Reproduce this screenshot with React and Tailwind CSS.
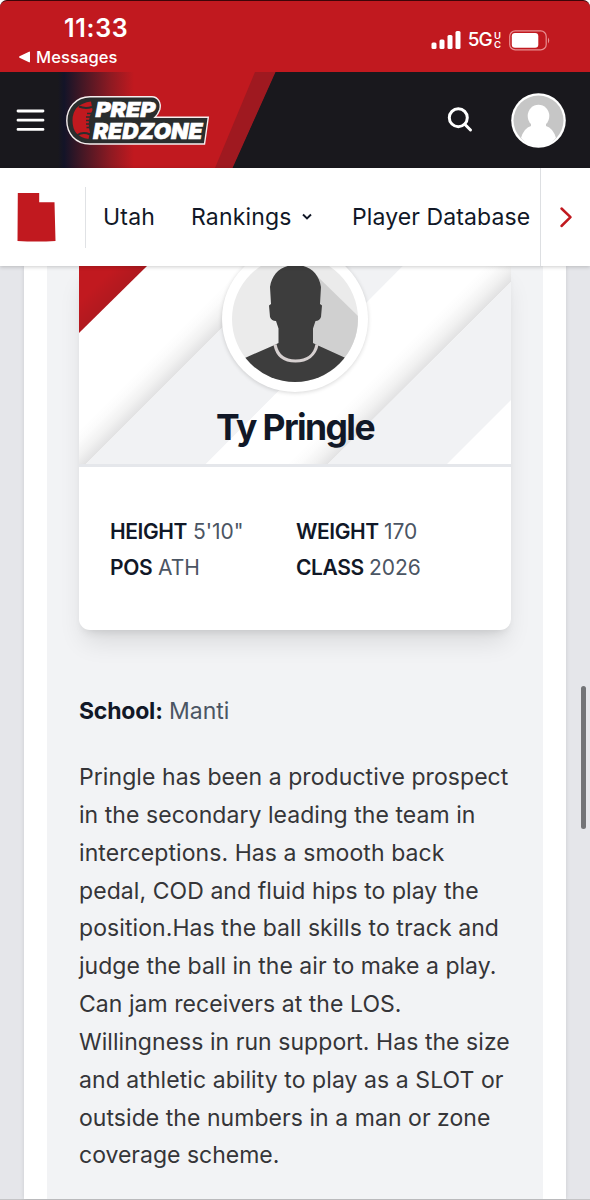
const paragraph = [
  { text: "Pringle has been a productive prospect", style: "tracking-[0.070px]" },
  { text: "in the secondary leading the team in", style: "tracking-[0.050px]" },
  { text: "interceptions. Has a smooth back", style: "tracking-[0.080px]" },
  { text: "pedal, COD and fluid hips to play the", style: "tracking-[0.070px]" },
  { text: "position.Has the ball skills to track and", style: "tracking-[0.080px]" },
  { text: "judge the ball in the air to make a play.", style: "tracking-[0.030px]" },
  { text: "Can jam receivers at the LOS.", style: "tracking-[0.050px]" },
  { text: "Willingness in run support. Has the size", style: "tracking-[0.050px]" },
  { text: "and athletic ability to play as a SLOT or", style: "tracking-[0.070px]" },
  { text: "outside the numbers in a man or zone", style: "tracking-[0.050px]" },
  { text: "coverage scheme.", style: "tracking-[0px]" },
];

const StatusBar = () => (
  <div className="bg-white">
    <div className="flex h-[72px] justify-between rounded-t-[7px] border-t border-[#3d0508] bg-[#c1191f] text-white">
      <div className="pl-[18px] pt-[13px]">
        <div className="pl-[46px] text-[25px] font-semibold leading-[29px] tracking-[0.700px]">11:33</div>
        <div className="mt-[3px] flex items-center gap-[5px] text-[16.5px] font-medium leading-[22px] tracking-[0.100px]">
          <svg width="13" height="12" viewBox="0 0 13 12" fill="white">
            <path d="M1.5 5.2 11 .7q1-.4 1 .7v9.2q0 1.100-1 .7L1.500 6.800q-1-.8 0-1.600z" />
          </svg>
          Messages
        </div>
      </div>
      <div className="flex h-[78px] items-center pr-[39px]">
        <svg width="30" height="20" viewBox="0 0 30 20" fill="white">
          <rect x="0.500" y="12.500" width="5" height="6.500" rx="1.500" />
          <rect x="8.500" y="9.500" width="5" height="9.500" rx="1.500" />
          <rect x="16.500" y="5" width="5" height="14" rx="1.500" />
          <rect x="24.500" y="1" width="5" height="18" rx="1.500" />
        </svg>
        <div className="ml-[7px] flex items-center text-[19px] font-medium leading-[24px] tracking-[-0.800px]">
          5G
          <span className="ml-[2px] w-[9px] text-[9.5px] font-semibold leading-[9px] tracking-normal">
            <span className="block">U</span>
            <span className="block">C</span>
          </span>
        </div>
        <svg className="ml-[6px]" width="42" height="21" viewBox="0 0 42 21">
          <rect x="0.700" y="0.900" width="36.500" height="19" rx="5.500" fill="none" stroke="#e88f91" strokeWidth="1.200" />
          <rect x="2.800" y="3" width="26.500" height="14.800" rx="3.200" fill="white" />
          <path d="M39 7.500q2.500 3 0 6z" fill="#e88f91" />
        </svg>
      </div>
    </div>
  </div>
);

const Logo = () => (
  <svg width="144" height="51" viewBox="66 95 144 51" fontFamily="Inter">
    <path
      d="M90 96.800H152C158 96.800 161.500 103 159.800 109.500Q158 114.500 155 117.300H208.300L204.500 144H90C75 144 66.800 133 66.800 120.500S76 96.800 90 96.800Z"
      fill="#2a2d2d"
      stroke="#f5eeee"
      strokeWidth="1.400"
    />
    <path d="M91 101.500Q72.500 104 72.500 120.500T88.500 139L90 132.500Q86.500 121 92.500 110z" fill="#c1191f" />
    <path
      d="M79 106.500Q85 109 92 107M77.500 135Q83 131.500 90 134.500"
      fill="none"
      stroke="#2a2d2d"
      strokeWidth="2"
    />
    <path d="M87 113.500h5M86 117h5M86 120.500h5M86 124h5M86.500 127.500h5" stroke="#2a2d2d" strokeWidth="1.600" />
    <g fill="white" stroke="white" strokeWidth="0.600" fontWeight="900" fontStyle="italic">
      <text x="95.500" y="117" fontSize="20.500" textLength="60" lengthAdjust="spacingAndGlyphs">PREP</text>
      <text x="93" y="138.500" fontSize="22" textLength="109.500" lengthAdjust="spacingAndGlyphs">REDZONE</text>
    </g>
  </svg>
);

const Header = () => (
  <header className="relative h-24 shrink-0 bg-[#19181d]">
    <svg className="absolute inset-0" width="590" height="96" viewBox="0 0 590 96">
      <defs>
        <linearGradient id="fade" x1="58" x2="134" y1="0" y2="0" gradientUnits="userSpaceOnUse">
          <stop offset="0" stopColor="#19181d" />
          <stop offset="0.080" stopColor="#131428" />
          <stop offset="0.300" stopColor="#401725" />
          <stop offset="0.700" stopColor="#8f1a22" />
          <stop offset="1" stopColor="#c1191f" />
        </linearGradient>
      </defs>
      <path d="M58 0H275L232 96H58z" fill="url(#fade)" />
      <path d="M255 0h20.500L232.500 96H215z" fill="#9f1920" />
    </svg>
    <div className="relative flex h-full items-center">
      <svg className="ml-4" width="29" height="24" viewBox="0 0 29 24" stroke="white" strokeWidth="2.800" strokeLinecap="round">
        <path d="M2 3h25M2 12.200h25M2 21.400h25" />
      </svg>
      <div className="ml-[21px]">
        <Logo />
      </div>
      <svg className="ml-[237px]" width="26" height="26" viewBox="0 0 26 26" fill="none" stroke="white" strokeWidth="3" strokeLinecap="round">
        <circle cx="11.300" cy="10.700" r="9" />
        <path d="m18 17.500 5.500 5.500" />
      </svg>
      <svg className="ml-[38px]" width="55" height="55" viewBox="0 0 55 55">
        <circle cx="27.500" cy="27.500" r="27.300" fill="white" />
        <circle cx="27.500" cy="27.500" r="25" fill="#c6c6c6" />
        <ellipse cx="27.500" cy="23" rx="10.800" ry="11.300" fill="white" />
        <path d="M20 30h15v3q7 2 10 12Q38 53 27.500 53T10 45q3-10 10-12z" fill="white" />
      </svg>
    </div>
  </header>
);

const Nav = () => (
  <nav className="relative z-10 flex h-[98px] shrink-0 items-center bg-white text-[23px] text-[#111827] shadow-[0_1px_4px_rgba(0,0,0,0.2)]">
    <svg className="ml-[17px]" width="39" height="50" viewBox="0 0 39 50" fill="#c1191f">
      <path d="M.8 1h21.400v9.300h15.300L38.500 49Q20 50.200.5 49z" />
    </svg>
    <div className="ml-[29px] h-[61px] w-px bg-[#e0e2e5]" />
    <span className="ml-[17px] w-[88px] whitespace-nowrap tracking-[0.200px]">Utah</span>
    <span className="w-[109px] whitespace-nowrap tracking-[0.150px]">Rankings</span>
    <svg width="14" height="10" viewBox="0 0 14 10" fill="none" stroke="#111827" strokeWidth="1.900">
      <path d="m3 2.500 4 4 4-4" />
    </svg>
    <span className="ml-[38px] w-[188px] whitespace-nowrap tracking-[0.100px]">Player Database</span>
    <div className="flex h-full flex-1 items-center border-l border-[#dddfe2] pl-[18px]">
      <svg width="15" height="22" viewBox="0 0 15 22" fill="none" stroke="#c1191f" strokeWidth="2.500" strokeLinecap="round" strokeLinejoin="round">
        <path d="m2.500 2.500 9 8.700-9 8.800" />
      </svg>
    </div>
  </nav>
);

const CardArt = () => (
  <svg className="absolute inset-0" width="432" height="198" viewBox="0 0 432 198">
    <defs>
      <linearGradient id="edgeA" x1="102.500" y1="102.500" x2="82" y2="82" gradientUnits="userSpaceOnUse">
        <stop offset="0" stopColor="#e1e1e2" />
        <stop offset="0.350" stopColor="#f1f1f1" />
        <stop offset="0.700" stopColor="#fbfbfb" />
        <stop offset="1" stopColor="#ffffff" />
      </linearGradient>
      <linearGradient id="edgeB" x1="224" y1="224" x2="203" y2="203" gradientUnits="userSpaceOnUse">
        <stop offset="0" stopColor="#e1e1e2" />
        <stop offset="0.350" stopColor="#f1f1f1" />
        <stop offset="0.700" stopColor="#fbfbfb" />
        <stop offset="1" stopColor="#ffffff" />
      </linearGradient>
      <linearGradient id="red" x1="34" y1="34" x2="18" y2="18" gradientUnits="userSpaceOnUse">
        <stop offset="0" stopColor="#b0191f" />
        <stop offset="1" stopColor="#c1191f" />
      </linearGradient>
    </defs>
    <rect width="432" height="198" fill="white" />
    <path d="M0 0H205L7 198H0z" fill="url(#edgeA)" />
    <path d="M205 0H324L127 198H7z" fill="#f1f2f4" />
    <path d="M324 0H432V16L249 198H127z" fill="url(#edgeB)" />
    <path d="M432 16V134L368 198H249z" fill="#f1f2f4" />
    <path d="M0 0H68L0 67z" fill="url(#red)" />
  </svg>
);

const PlayerPhoto = () => (
  <div className="relative mx-auto -mt-5 h-[146px] w-[146px] rounded-full bg-white p-[10px] shadow-[0_1px_4px_rgba(0,0,0,0.16)]">
    <svg width="126" height="126" viewBox="0 0 126 126">
      <defs>
        <clipPath id="round">
          <circle cx="63" cy="63" r="63" />
        </clipPath>
      </defs>
      <g clipPath="url(#round)">
        <rect width="126" height="126" fill="#ebebeb" />
        <path d="M84 19 126 60V126H60z" fill="#d0d0d0" />
        <path
          d="M0 107.500 14 101.500 42.500 89 46.500 87V72.500L44 65Q39.500 65 38 61L37 49.500 39 48 38 31C40 17 50 9 63.500 9S87 17 89 31L88 48 90 49.500 89 61Q87.500 65 83.500 65L81 72.500V87L85 89 112.500 101.500 126 107.500V126H0z"
          fill="#3d3d3d"
        />
        <path d="M43 88.500C45 99 52 105 63.500 105S83 99 85 88.500" fill="none" stroke="#d6d0d0" strokeWidth="3.200" />
      </g>
    </svg>
  </div>
);

const Stat = ({ label, value, labelStyle }) => (
  <div className="whitespace-nowrap text-[21px] leading-9 text-[#4b5563]">
    <span className={`inline-block font-semibold tracking-[-0.400px] text-[#111827] ${labelStyle}`}>{label}</span>
    <span className="ml-1.5 inline-block">{value}</span>
  </div>
);

const PlayerCard = () => (
  <div className="h-[364px] rounded-b-[11px] bg-white shadow-[0_16px_26px_-5px_rgba(0,0,0,0.11),0_6px_10px_-5px_rgba(0,0,0,0.12)]">
    <div className="relative h-[201px] border-b-[3px] border-[#e5e7eb]">
      <CardArt />
      <div className="relative flow-root">
        <PlayerPhoto />
        <h1 className="mt-[14px] whitespace-nowrap text-center text-[35.5px] font-bold leading-[44px] tracking-[-1.600px] text-[#111827]">
          Ty Pringle
        </h1>
      </div>
    </div>
    <div className="grid grid-cols-[186px_1fr] pl-[31px] pt-[47px]">
      <Stat label="HEIGHT" value={"5'10\""} labelStyle="w-[77px]" />
      <Stat label="WEIGHT" value="170" labelStyle="w-[82px]" />
      <Stat label="POS" value="ATH" labelStyle="w-[42px]" />
      <Stat label="CLASS" value="2026" labelStyle="w-[67px]" />
    </div>
  </div>
);

export default function App() {
  return (
    <div className="relative flex h-[1200px] w-[590px] flex-col overflow-hidden font-['Inter',sans-serif]">
      <StatusBar />
      <Header />
      <Nav />
      <main className="flex min-h-0 flex-1 justify-center border-b border-[#c4c4c6] bg-[#e5e6ea]">
        <div className="w-[542px] bg-white px-[23px] shadow-[0_0_4px_rgba(0,0,0,0.12)]">
          <div className="h-full overflow-hidden bg-[#f2f3f5] px-8">
            <PlayerCard />
            <p className="mt-[63px] whitespace-nowrap text-[23px] leading-9 text-[#4b5563]">
              <strong className="inline-block w-[84px] font-bold tracking-[-0.200px] text-[#111827]">School:</strong>
              <span className="ml-[6px]">Manti</span>
            </p>
            <p className="mt-[30px] text-[23px] leading-[37.850px] text-[#353538]">
              {paragraph.map((line) => (
                <span key={line.text} className={`block whitespace-nowrap ${line.style}`}>
                  {line.text}
                </span>
              ))}
            </p>
          </div>
        </div>
      </main>
      {/* scroll indicator */}
      <div className="absolute right-1 top-[686px] h-[143px] w-[5px] rounded-full bg-[#737477]" />
    </div>
  );
}
